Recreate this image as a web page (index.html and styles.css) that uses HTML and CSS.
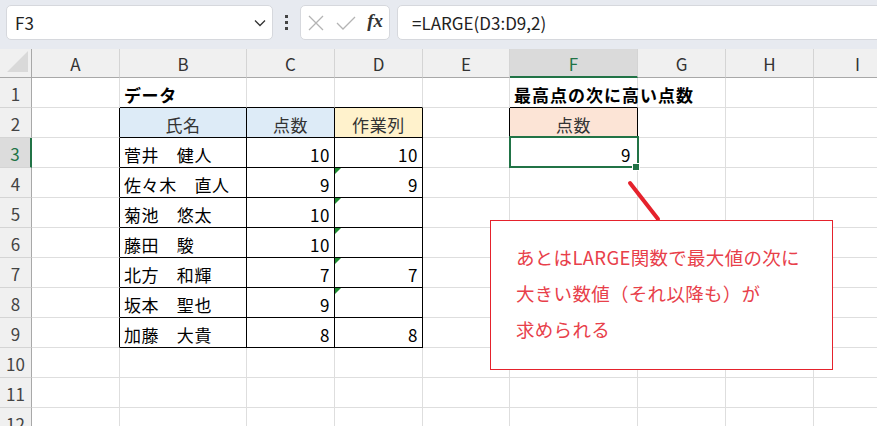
FILE: index.html
```html
<!DOCTYPE html>
<html lang="ja">

<head>
    <meta charset="UTF-8">
    <title>LARGE関数</title>
    <link rel="stylesheet" href="styles.css">
</head>

<body>
    <div class="app">
        <div class="toolbar">
            <div class="name-box">
                <span>F3</span>
                <svg class="chevron" width="12" height="8" viewBox="0 0 12 8">
                    <polyline points="1,1.5 6,6.5 11,1.5" fill="none" stroke="#333" stroke-width="1.3" />
                </svg>
            </div>
            <div class="grip"><i></i><i></i><i></i></div>
            <div class="func-box">
                <svg width="18" height="16" viewBox="0 0 18 16">
                    <path d="M2 1 L16 15 M16 1 L2 15" stroke="#b4b4b4" stroke-width="1.3" fill="none" />
                </svg>
                <svg width="20" height="16" viewBox="0 0 20 16">
                    <polyline points="1,8 7,14 19,2" stroke="#b4b4b4" stroke-width="1.3" fill="none" />
                </svg>
                <span class="fx">fx</span>
            </div>
            <div class="formula">=LARGE(D3:D9,2)</div>
        </div>

        <div class="sheet">
            <div class="corner"><span></span></div>
            <div class="ch">A</div>
            <div class="ch">B</div>
            <div class="ch">C</div>
            <div class="ch">D</div>
            <div class="ch">E</div>
            <div class="ch active">F</div>
            <div class="ch">G</div>
            <div class="ch">H</div>
            <div class="ch">I</div>

            <div class="rh">1</div>
            <div class="c"></div>
            <div class="c tt bold">データ</div>
            <div class="c tt"></div>
            <div class="c tt"></div>
            <div class="c"></div>
            <div class="c tt bold wide">最高点の次に高い点数</div>
            <div class="c"></div>
            <div class="c"></div>
            <div class="c"></div>

            <div class="rh">2</div>
            <div class="c tl"></div>
            <div class="c t head blue">氏名</div>
            <div class="c t head blue">点数</div>
            <div class="c t head yellow">作業列</div>
            <div class="c tl"></div>
            <div class="c t head peach">点数</div>
            <div class="c"></div>
            <div class="c"></div>
            <div class="c"></div>

            <div class="rh active">3</div>
            <div class="c tl"></div>
            <div class="c t">菅井　健人</div>
            <div class="c t num">10</div>
            <div class="c t num">10</div>
            <div class="c"></div>
            <div class="c num selected">9</div>
            <div class="c"></div>
            <div class="c"></div>
            <div class="c"></div>

            <div class="rh">4</div>
            <div class="c tl"></div>
            <div class="c t">佐々木　直人</div>
            <div class="c t num">9</div>
            <div class="c t num flag">9</div>
            <div class="c"></div>
            <div class="c"></div>
            <div class="c"></div>
            <div class="c"></div>
            <div class="c"></div>

            <div class="rh">5</div>
            <div class="c tl"></div>
            <div class="c t">菊池　悠太</div>
            <div class="c t num">10</div>
            <div class="c t num flag"></div>
            <div class="c"></div>
            <div class="c"></div>
            <div class="c"></div>
            <div class="c"></div>
            <div class="c"></div>

            <div class="rh">6</div>
            <div class="c tl"></div>
            <div class="c t">藤田　駿</div>
            <div class="c t num">10</div>
            <div class="c t num flag"></div>
            <div class="c"></div>
            <div class="c"></div>
            <div class="c"></div>
            <div class="c"></div>
            <div class="c"></div>

            <div class="rh">7</div>
            <div class="c tl"></div>
            <div class="c t">北方　和輝</div>
            <div class="c t num">7</div>
            <div class="c t num flag">7</div>
            <div class="c"></div>
            <div class="c"></div>
            <div class="c"></div>
            <div class="c"></div>
            <div class="c"></div>

            <div class="rh">8</div>
            <div class="c tl"></div>
            <div class="c t">坂本　聖也</div>
            <div class="c t num">9</div>
            <div class="c t num flag"></div>
            <div class="c"></div>
            <div class="c"></div>
            <div class="c"></div>
            <div class="c"></div>
            <div class="c"></div>

            <div class="rh">9</div>
            <div class="c tl"></div>
            <div class="c t">加藤　大貴</div>
            <div class="c t num">8</div>
            <div class="c t num">8</div>
            <div class="c"></div>
            <div class="c"></div>
            <div class="c"></div>
            <div class="c"></div>
            <div class="c"></div>

            <div class="rh">10</div>
            <div class="c"></div>
            <div class="c"></div>
            <div class="c"></div>
            <div class="c"></div>
            <div class="c"></div>
            <div class="c"></div>
            <div class="c"></div>
            <div class="c"></div>
            <div class="c"></div>

            <div class="rh">11</div>
            <div class="c"></div>
            <div class="c"></div>
            <div class="c"></div>
            <div class="c"></div>
            <div class="c"></div>
            <div class="c"></div>
            <div class="c"></div>
            <div class="c"></div>
            <div class="c"></div>

            <div class="rh">12</div>
            <div class="c"></div>
            <div class="c"></div>
            <div class="c"></div>
            <div class="c"></div>
            <div class="c"></div>
            <div class="c"></div>
            <div class="c"></div>
            <div class="c"></div>
            <div class="c"></div>
        </div>

        <!-- callout drawn over the sheet -->
        <svg class="pointer" width="40" height="46" viewBox="0 0 40 46">
            <line x1="5" y1="5" x2="33" y2="41" stroke="#e5222c" stroke-width="4" stroke-linecap="round" />
        </svg>
        <div class="callout">
            <p>あとはLARGE関数で最大値の次に</p>
            <p>大きい数値（それ以降も）が</p>
            <p>求められる</p>
        </div>
    </div>
</body>

</html>
```

FILE: styles.css
```css
* {
    box-sizing: border-box;
}

:root {
    --grid: #dedede;
    --header: #f0f0f0;
    --green: #217346;
    --red: #e5222c;
}

body {
    margin: 0;
    font-family: "Noto Sans CJK JP", "Noto Sans", sans-serif;
    color: #000;
    background: #fff;
}

.app {
    position: relative;
    width: 877px;
    height: 426px;
    overflow: hidden;
}

/* formula bar */
.toolbar {
    height: 49px;
    background: #e7eaf0;
    display: flex;
    align-items: flex-start;
    padding: 5px 0 0 6px;
}

.name-box,
.func-box,
.formula {
    height: 35px;
    background: #fff;
    border: 1px solid #d6d8dd;
    border-radius: 5px;
    display: flex;
    align-items: center;
}

.name-box {
    width: 267px;
    padding: 0 6px 0 8px;
    justify-content: space-between;
    font-size: 17px;
    color: #222;
}

.grip {
    width: 27px;
    height: 35px;
    display: flex;
    flex-direction: column;
    align-items: center;
    justify-content: center;
    gap: 3px;
}

.grip i {
    width: 3px;
    height: 3px;
    background: #444;
}

.func-box {
    width: 90px;
    padding: 0 6px;
    justify-content: space-between;
}

.fx {
    font-family: "Liberation Serif", serif;
    font-style: italic;
    font-weight: bold;
    font-size: 19px;
    color: #333;
    margin-top: -3px;
}

.formula {
    margin-left: 7px;
    flex: 1;
    margin-right: -10px;
    padding-left: 14px;
    font-size: 17px;
    color: #222;
}

/* sheet grid */
.sheet {
    display: grid;
    width: 902px;
    grid-template-columns: 32px 88px 127px 88px 88px 87px 128px 88px 88px 88px;
    grid-template-rows: 29px repeat(12, 30px);
    font-size: 17px;
}

.corner {
    background: var(--header);
    border-right: 1px solid #a8a8a8;
    border-bottom: 1px solid #a8a8a8;
    padding: 2px 4px 5px 7px;
}

.corner span {
    display: block;
    width: 21px;
    height: 21px;
    background: #d9d9d9;
    clip-path: polygon(100% 0, 100% 100%, 0 100%);
}

.ch {
    background: var(--header);
    border-right: 1px solid #d4d4d4;
    border-bottom: 1px solid #a8a8a8;
    display: flex;
    align-items: center;
    justify-content: center;
    color: #333;
    padding-top: 1px;
}

.ch.active {
    background: #dadada;
    color: var(--green);
    border-bottom: 2px solid var(--green);
}

.rh {
    background: var(--header);
    border-right: 1px solid #a8a8a8;
    border-bottom: 1px solid #d4d4d4;
    display: flex;
    align-items: center;
    justify-content: center;
    color: #444;
    padding-top: 2px;
}

.rh.active {
    background: #dcdcdc;
    color: var(--green);
    border-right: 2px solid var(--green);
}

.c {
    border-right: 1px solid var(--grid);
    border-bottom: 1px solid var(--grid);
    display: flex;
    align-items: center;
    padding: 3px 4px 0;
    white-space: nowrap;
    letter-spacing: 0.6px;
}

.c.tt {
    border-bottom-color: #000;
}

.c.tl {
    border-right-color: #000;
}

.c.t {
    border-right-color: #000;
    border-bottom-color: #000;
}

.bold {
    font-weight: bold;
}

.wide {
    overflow: visible;
    letter-spacing: 1px;
}

.head {
    justify-content: center;
    color: #333;
}

.blue {
    background: #ddebf7;
}

.yellow {
    background: #fff2cc;
}

.peach {
    background: #fce4d6;
}

.num {
    justify-content: flex-end;
}

.flag {
    position: relative;
}

.flag::before {
    content: "";
    position: absolute;
    top: 0;
    left: 0;
    border-top: 6px solid #1d8a2f;
    border-right: 6px solid transparent;
}

.selected {
    position: relative;
    padding-right: 6px;
}

.selected::after {
    content: "";
    position: absolute;
    top: -2px;
    left: -1px;
    right: -2px;
    bottom: -1px;
    border: 2px solid var(--green);
}

.selected::before {
    content: "";
    position: absolute;
    right: -3px;
    bottom: -4px;
    width: 6px;
    height: 6px;
    background: var(--green);
    border: 1px solid #fff;
    z-index: 1;
}

/* callout */
.pointer {
    position: absolute;
    left: 625px;
    top: 178px;
}

.callout {
    position: absolute;
    left: 490px;
    top: 220px;
    width: 343px;
    height: 150px;
    background: #fff;
    border: 1.5px solid var(--red);
    padding: 18px 0 0 25px;
    color: #e8404a;
    font-size: 18.5px;
    letter-spacing: 0.3px;
}

.callout p {
    margin: 0;
    line-height: 36px;
}
```
